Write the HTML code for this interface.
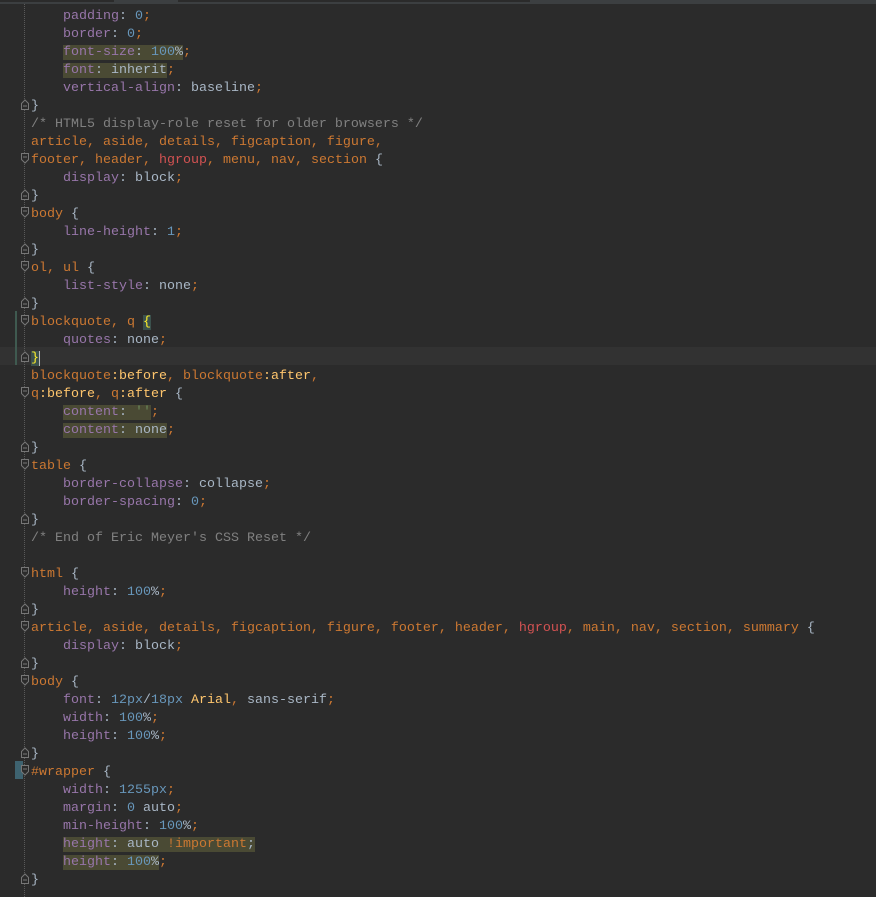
<!DOCTYPE html>
<html><head><meta charset="utf-8"><style>
html,body{margin:0;padding:0;background:#2b2b2b;width:876px;height:897px;overflow:hidden}
#top{position:absolute;left:0;top:0;width:876px;height:4px;background:#3c3f41}
#top i{position:absolute;top:0;height:2px;background:#2b2b2b}
#dots{position:absolute;left:24px;top:4px;height:893px;border-left:1px dotted #5a5a5a}
#code{position:absolute;left:31px;top:5px;font-family:"Liberation Mono",monospace;font-size:13.33px;line-height:18px;color:#a9b7c6}
.l{height:15px;padding-top:3px;position:relative;white-space:pre}
.p{color:#9876aa}.n{color:#6897bb}.s{color:#cc7832}.c{color:#808080}.r{color:#d25252}.g{color:#6a8759}.y{color:#ffc66d}
.h{background:#4a4a34}
.cur{position:absolute;left:0;top:347px;width:876px;height:18px;background:#323232}
.f{position:absolute;left:-11px;top:4px}
.b{background:#3b514d;color:#ffef28}
</style></head><body>
<div id="top"><i style="left:0;width:114px"></i><i style="left:178px;width:352px"></i></div>
<div class="cur"></div>
<div id="dots"></div>
<div style="position:absolute;left:15px;top:311px;width:2px;height:54px;background:#3f5a50"></div>
<div style="position:absolute;left:15px;top:761px;width:8px;height:18px;background:#3e6370"></div>
<svg width="0" height="0" style="position:absolute"><defs>
<symbol id="up" viewBox="0 0 10 11"><path d="M1.5 10.5V4.5L5 1 8.5 4.5V10.5Z M3 7H7" fill="#2b2b2b" stroke="#777" stroke-width="1"/></symbol>
<symbol id="dn" viewBox="0 0 10 11"><path d="M1.5 0.5V6.5L5 10 8.5 6.5V0.5Z M3 4H7" fill="#2b2b2b" stroke="#777" stroke-width="1"/></symbol>
</defs></svg>
<div id="code"><div class="l">    <span class="p">padding</span>: <span class="n">0</span><span class="s">;</span></div><div class="l">    <span class="p">border</span>: <span class="n">0</span><span class="s">;</span></div><div class="l">    <span class="h"><span class="p">font-size</span>: <span class="n">100</span>%</span><span class="s">;</span></div><div class="l">    <span class="h"><span class="p">font</span>: inherit</span><span class="s">;</span></div><div class="l">    <span class="p">vertical-align</span>: baseline<span class="s">;</span></div><div class="l"><svg class="f" width="10" height="11"><use href="#up"/></svg>}</div><div class="l"><span class="c">/* HTML5 display-role reset for older browsers */</span></div><div class="l"><span class="s">article, aside, details, figcaption, figure,</span></div><div class="l"><svg class="f" width="10" height="11"><use href="#dn"/></svg><span class="s">footer, header, </span><span class="r">hgroup</span><span class="s">, menu, nav, section </span>{</div><div class="l">    <span class="p">display</span>: block<span class="s">;</span></div><div class="l"><svg class="f" width="10" height="11"><use href="#up"/></svg>}</div><div class="l"><svg class="f" width="10" height="11"><use href="#dn"/></svg><span class="s">body </span>{</div><div class="l">    <span class="p">line-height</span>: <span class="n">1</span><span class="s">;</span></div><div class="l"><svg class="f" width="10" height="11"><use href="#up"/></svg>}</div><div class="l"><svg class="f" width="10" height="11"><use href="#dn"/></svg><span class="s">ol, ul </span>{</div><div class="l">    <span class="p">list-style</span>: none<span class="s">;</span></div><div class="l"><svg class="f" width="10" height="11"><use href="#up"/></svg>}</div><div class="l"><svg class="f" width="10" height="11"><use href="#dn"/></svg><span class="s">blockquote, q </span><span class="b">{</span></div><div class="l">    <span class="p">quotes</span>: none<span class="s">;</span></div><div class="l"><svg class="f" width="10" height="11"><use href="#up"/></svg><span class="b">}</span><span style="border-left:1px solid #bbb"></span></div><div class="l"><span class="s">blockquote</span><span class="y">:before</span><span class="s">, blockquote</span><span class="y">:after</span><span class="s">,</span></div><div class="l"><svg class="f" width="10" height="11"><use href="#dn"/></svg><span class="s">q</span><span class="y">:before</span><span class="s">, q</span><span class="y">:after </span>{</div><div class="l">    <span class="h"><span class="p">content</span>: <span class="g">''</span></span><span class="s">;</span></div><div class="l">    <span class="h"><span class="p">content</span>: none</span><span class="s">;</span></div><div class="l"><svg class="f" width="10" height="11"><use href="#up"/></svg>}</div><div class="l"><svg class="f" width="10" height="11"><use href="#dn"/></svg><span class="s">table </span>{</div><div class="l">    <span class="p">border-collapse</span>: collapse<span class="s">;</span></div><div class="l">    <span class="p">border-spacing</span>: <span class="n">0</span><span class="s">;</span></div><div class="l"><svg class="f" width="10" height="11"><use href="#up"/></svg>}</div><div class="l"><span class="c">/* End of Eric Meyer's CSS Reset */</span></div><div class="l"> </div><div class="l"><svg class="f" width="10" height="11"><use href="#dn"/></svg><span class="s">html </span>{</div><div class="l">    <span class="p">height</span>: <span class="n">100</span>%<span class="s">;</span></div><div class="l"><svg class="f" width="10" height="11"><use href="#up"/></svg>}</div><div class="l"><svg class="f" width="10" height="11"><use href="#dn"/></svg><span class="s">article, aside, details, figcaption, figure, footer, header, </span><span class="r">hgroup</span><span class="s">, main, nav, section, summary </span>{</div><div class="l">    <span class="p">display</span>: block<span class="s">;</span></div><div class="l"><svg class="f" width="10" height="11"><use href="#up"/></svg>}</div><div class="l"><svg class="f" width="10" height="11"><use href="#dn"/></svg><span class="s">body </span>{</div><div class="l">    <span class="p">font</span>: <span class="n">12px</span>/<span class="n">18px</span> <span class="y">Arial</span><span class="s">,</span> sans-serif<span class="s">;</span></div><div class="l">    <span class="p">width</span>: <span class="n">100</span>%<span class="s">;</span></div><div class="l">    <span class="p">height</span>: <span class="n">100</span>%<span class="s">;</span></div><div class="l"><svg class="f" width="10" height="11"><use href="#up"/></svg>}</div><div class="l"><svg class="f" width="10" height="11"><use href="#dn"/></svg><span class="s">#wrapper </span>{</div><div class="l">    <span class="p">width</span>: <span class="n">1255px</span><span class="s">;</span></div><div class="l">    <span class="p">margin</span>: <span class="n">0</span> auto<span class="s">;</span></div><div class="l">    <span class="p">min-height</span>: <span class="n">100</span>%<span class="s">;</span></div><div class="l">    <span class="h"><span class="p">height</span>: auto <span class="s">!important</span>;</span></div><div class="l">    <span class="h"><span class="p">height</span>: <span class="n">100</span>%</span><span class="s">;</span></div><div class="l"><svg class="f" width="10" height="11"><use href="#up"/></svg>}</div></div>
</body></html>
